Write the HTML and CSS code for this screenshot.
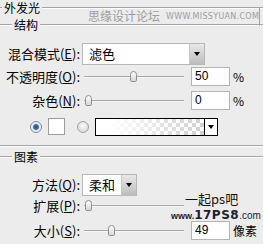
FILE: index.html
```html
<!DOCTYPE html>
<html>
<head>
<meta charset="utf-8">
<link rel="stylesheet" href="styles.css">
</head>
<body>
<div class="panel">
  <div class="legend head"><span class="lt">外发光</span></div>
  <div class="legend sub"><span class="lt">结构</span></div>

  <div class="row r1">
    <span class="lbl">混合模式(<u>E</u>):</span>
    <div class="select wide"><span class="val">滤色</span><span class="arrow"><i></i></span></div>
  </div>
  <div class="row r2">
    <span class="lbl">不透明度(<u>O</u>):</span>
    <div class="slider"><span class="thumb" style="left:46px"></span></div>
    <div class="num">50</div><span class="unit">%</span>
  </div>
  <div class="row r3">
    <span class="lbl">杂色(<u>N</u>):</span>
    <div class="slider"><span class="thumb" style="left:1px"></span></div>
    <div class="num">0</div><span class="unit">%</span>
  </div>
  <div class="row r4">
    <span class="radio on"></span>
    <span class="swatch"></span>
    <span class="radio"></span>
    <div class="grad"><span class="garrow"><i></i></span></div>
  </div>
  <div class="sep"></div>
  <div class="legend sub2"><span class="lt">图素</span></div>

  <div class="row r5">
    <span class="lbl">方法(<u>Q</u>):</span>
    <div class="select small"><span class="val">柔和</span><span class="arrow"><i></i></span></div>
  </div>
  <div class="row r6">
    <span class="lbl">扩展(<u>P</u>):</span>
    <div class="slider"><span class="thumb" style="left:1px"></span></div>
  </div>
  <div class="row r7">
    <span class="lbl">大小(<u>S</u>):</span>
    <div class="slider"><span class="thumb" style="left:24px"></span></div>
    <div class="num">49</div><span class="unit">像素</span>
  </div>

  <div class="wm-top"><span class="wm-cn">思缘设计论坛</span><span class="wm-en">WWW.MISSYUAN.COM</span></div>
  <div class="wm-edge"></div>
  <div class="wm-bot">
    <div class="wm-b1">一起ps吧</div>
    <div class="wm-b2"><span class="w1">www.</span><span class="w2">17PS8</span><span class="w3">.com</span></div>
  </div>
</div>
</body>
</html>
```

FILE: styles.css
```css
html, body {
  margin: 0;
  padding: 0;
}
body {
  width: 263px;
  height: 244px;
  overflow: hidden;
  background: #ececec;
  font-family: "Noto Sans CJK SC", "Liberation Sans", sans-serif;
  font-size: 13px;
  color: #000;
}
.panel {
  position: relative;
  width: 263px;
  height: 244px;
  display: flex;
  flex-direction: column;
}
.legend {
  display: flex;
  align-items: center;
  height: 14px;
}
.legend::before,
.legend::after {
  content: "";
  height: 1px;
  background: #a4a4a4;
  border-bottom: 1px solid #fff;
}
.legend::after {
  flex: 1;
}
.legend .lt {
  padding: 0 2px;
  font-size: 12px;
  line-height: 14px;
}
.head {
  height: 16px;
  margin-top: 0;
}
.head .lt { line-height: 16px; }
.head::before { width: 2px; }
.sub { margin-top: 2px; }
.sub::before { width: 12px; }
.sub2 { margin-top: 3px; }
.sub2::before { width: 12px; }

.row {
  display: flex;
  align-items: center;
}
.lbl {
  width: 80px;
  text-align: right;
  white-space: nowrap;
  line-height: 14px;
  margin-right: 2px;
}
.lbl u {
  text-decoration: underline;
  text-underline-offset: 1px;
}
.r1 { margin-top: 11px; height: 22px; }
.r2 { margin-top: 2px; height: 19px; }
.r3 { margin-top: 5px; height: 19px; }
.r4 { margin-top: 7px; height: 19px; padding-left: 30px; }
.r5 { margin-top: 10px; height: 22px; }
.r6 { margin-top: 2px; height: 16px; }
.r7 { margin-top: 7px; height: 19px; }

.select {
  display: flex;
  height: 22px;
  box-sizing: border-box;
  background: #fff;
  border: 1px solid #b8b8b8;
}
.select.wide { width: 123px; }
.select.small { width: 55px; }
.select .val {
  flex: 1;
  padding-left: 6px;
  line-height: 20px;
  font-size: 13px;
}
.select .arrow {
  width: 14px;
  display: flex;
  align-items: center;
  justify-content: center;
  background: linear-gradient(#e8e8e8, #bdbdbd);
  border-left: 1px solid #c8c8c8;
}
.arrow i, .garrow i {
  width: 0;
  height: 0;
  border-left: 3px solid transparent;
  border-right: 3px solid transparent;
  border-top: 4px solid #000;
}

.slider {
  position: relative;
  width: 100px;
  height: 14px;
  margin-left: 2px;
}
.slider::before {
  content: "";
  position: absolute;
  left: 0;
  right: 0;
  top: 6px;
  height: 1px;
  background: #a8a8a8;
  border-bottom: 1px solid #f8f8f8;
}
.thumb {
  position: absolute;
  top: 1px;
  width: 7px;
  height: 11px;
  box-sizing: border-box;
  border: 1px solid #8e8e8e;
  border-radius: 4px 4px 2px 2px;
  background: linear-gradient(#fdfdfd, #d6d6d6);
}
.num {
  width: 39px;
  height: 19px;
  box-sizing: border-box;
  margin-left: 7px;
  background: #fff;
  border: 1px solid #b4b4b4;
  font-family: "Liberation Sans", sans-serif;
  font-size: 12px;
  line-height: 17px;
  padding-left: 3px;
}
.unit {
  margin-left: 3px;
  font-size: 12px;
}

.radio {
  width: 12px;
  height: 12px;
  box-sizing: border-box;
  border-radius: 50%;
  border: 1px solid #a2a2a2;
  background: radial-gradient(circle at 50% 40%, #fafafa, #d0d0d0);
  margin-right: 6px;
}
.radio.on {
  background: radial-gradient(circle, #1f4f7e 0, #3d77ad 2.5px, #dfe8f0 3.5px, #f4f4f4 5px);
  border-color: #7d8a96;
}
.swatch {
  width: 17px;
  height: 17px;
  box-sizing: border-box;
  border: 1px solid #9c9c9c;
  background: #fff;
  margin-right: 12px;
}
.grad {
  width: 123px;
  height: 18px;
  box-sizing: border-box;
  border: 1px solid #000;
  display: flex;
  justify-content: flex-end;
  background:
    linear-gradient(to right, #fff 0%, #fff 12%, rgba(255,255,255,0) 88%),
    repeating-conic-gradient(#d0d0d0 0 25%, #fff 0 50%) 0 0 / 8px 8px;
}
.garrow {
  width: 12px;
  background: #fff;
  border-left: 1px solid #000;
  display: flex;
  align-items: center;
  justify-content: center;
}
.sep {
  margin-top: 9px;
  height: 1px;
  background: #a4a4a4;
  border-bottom: 1px solid #fff;
}

.wm-top {
  position: absolute;
  left: 88px;
  top: 9px;
  display: flex;
  align-items: center;
  color: #9e9e9e;
  white-space: nowrap;
}
.wm-cn {
  font-size: 12px;
  line-height: 14px;
}
.wm-en {
  margin-left: 6px;
  font-family: "DejaVu Sans", sans-serif;
  font-size: 8px;
  letter-spacing: 0.3px;
}
.wm-edge {
  position: absolute;
  left: 259px;
  top: 8px;
  width: 1px;
  height: 18px;
  background: #a4a4a4;
}
.wm-bot {
  position: absolute;
  left: 171px;
  top: 189px;
  white-space: nowrap;
}
.wm-b1 {
  margin-left: 14px;
  font-size: 13px;
  line-height: 19px;
  color: #111;
  font-family: "Noto Sans CJK SC", sans-serif;
}
.wm-b2 {
  display: flex;
  align-items: baseline;
  line-height: 14px;
  color: #1c2030;
  font-family: "Liberation Sans", sans-serif;
  font-weight: bold;
}
.w1 { font-size: 9px; }
.w2 { font-size: 12px; font-weight: 900; letter-spacing: 0.5px; font-family: "DejaVu Sans", sans-serif; }
.w3 { font-size: 10px; font-weight: normal; }
```
